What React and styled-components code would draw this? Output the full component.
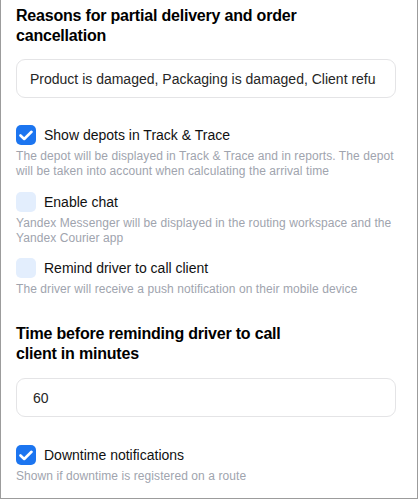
import React from 'react';
import styled, { createGlobalStyle } from 'styled-components';

const GlobalStyle = createGlobalStyle`
    html, body {
        margin: 0;
        padding: 0;
        background: #ffffff;
    }
    body {
        font-family: "Liberation Sans", Arial, sans-serif;
        -webkit-font-smoothing: antialiased;
    }
`

const Frame = styled.div`
    width: 418px;
    height: 499px;
    box-sizing: border-box;
    border: 1px solid #9c9c9c;
    border-top: none;
    padding: 6px 21px 0 15px;
    overflow: hidden;
    background: white;
`

const Heading = styled.h3`
    margin: ${props => props.$top || 0}px 0 0 0;
    max-width: 300px;
    font-size: 16px;
    line-height: 20px;
    font-weight: 700;
    letter-spacing: -0.2px;
    color: #000;
`

const Field = styled.div`
    margin-top: ${props => props.$top || 13}px;
    height: 39px;
    box-sizing: border-box;
    border: 1px solid #e4e4e6;
    border-radius: 9px;
    display: flex;
    align-items: center;
    padding: 0 19px 0 ${props => props.$pad || 13}px;
    overflow: hidden;
`

const FieldText = styled.span`
    font-size: 14px;
    color: #262626;
    white-space: nowrap;
    overflow: hidden;
`

const Option = styled.div`
    margin-top: ${props => props.$top || 12}px;
    display: flex;
    flex-direction: column;
`

const OptionRow = styled.label`
    display: flex;
    align-items: center;
    gap: 8px;
    height: 20px;
`

const Box = styled.span`
    width: 20px;
    height: 20px;
    flex-shrink: 0;
    border-radius: 5px;
    background: ${props => (props.$checked ? '#1c75f0' : '#e3eefd')};
    display: flex;
    align-items: center;
    justify-content: center;
`

const OptionLabel = styled.span`
    font-size: 14px;
    color: #111;
`

const Hint = styled.p`
    margin: 4px 0 0 0;
    font-size: 12px;
    line-height: 15px;
    letter-spacing: 0.08px;
    color: #a0a4ae;
`

const Check = () => (
    <svg width="14" height="11" viewBox="0 0 14 11">
        <path d="M1.5 5.5 L5.2 9 L12.5 1.8" fill="none" stroke="white" strokeWidth="2.6" strokeLinecap="round" strokeLinejoin="round" />
    </svg>
)

const Setting = ({ checked, label, hint, top }) => (
    <Option $top={top}>
        <OptionRow>
            <Box $checked={checked}>{checked && <Check />}</Box>
            <OptionLabel>{label}</OptionLabel>
        </OptionRow>
        <Hint>{hint}</Hint>
    </Option>
)

const App = () => (
    <>
        <GlobalStyle />
        <Frame>
            <Heading>Reasons for partial delivery and order cancellation</Heading>
            <Field $top={13}>
                <FieldText>Product is damaged, Packaging is damaged, Client refused the order</FieldText>
            </Field>
            <Setting
                top={27}
                checked
                label="Show depots in Track & Trace"
                hint="The depot will be displayed in Track & Trace and in reports. The depot will be taken into account when calculating the arrival time"
            />
            <Setting
                top={13}
                label="Enable chat"
                hint="Yandex Messenger will be displayed in the routing workspace and the Yandex Courier app"
            />
            <Setting
                top={12}
                label="Remind driver to call client"
                hint="The driver will receive a push notification on their mobile device"
            />
            <Heading $top={27}>Time before reminding driver to call client in minutes</Heading>
            <Field $top={14} $pad={16}>
                <FieldText>60</FieldText>
            </Field>
            <Setting
                top={28}
                checked
                label="Downtime notifications"
                hint="Shown if downtime is registered on a route"
            />
        </Frame>
    </>
)

export default App;
